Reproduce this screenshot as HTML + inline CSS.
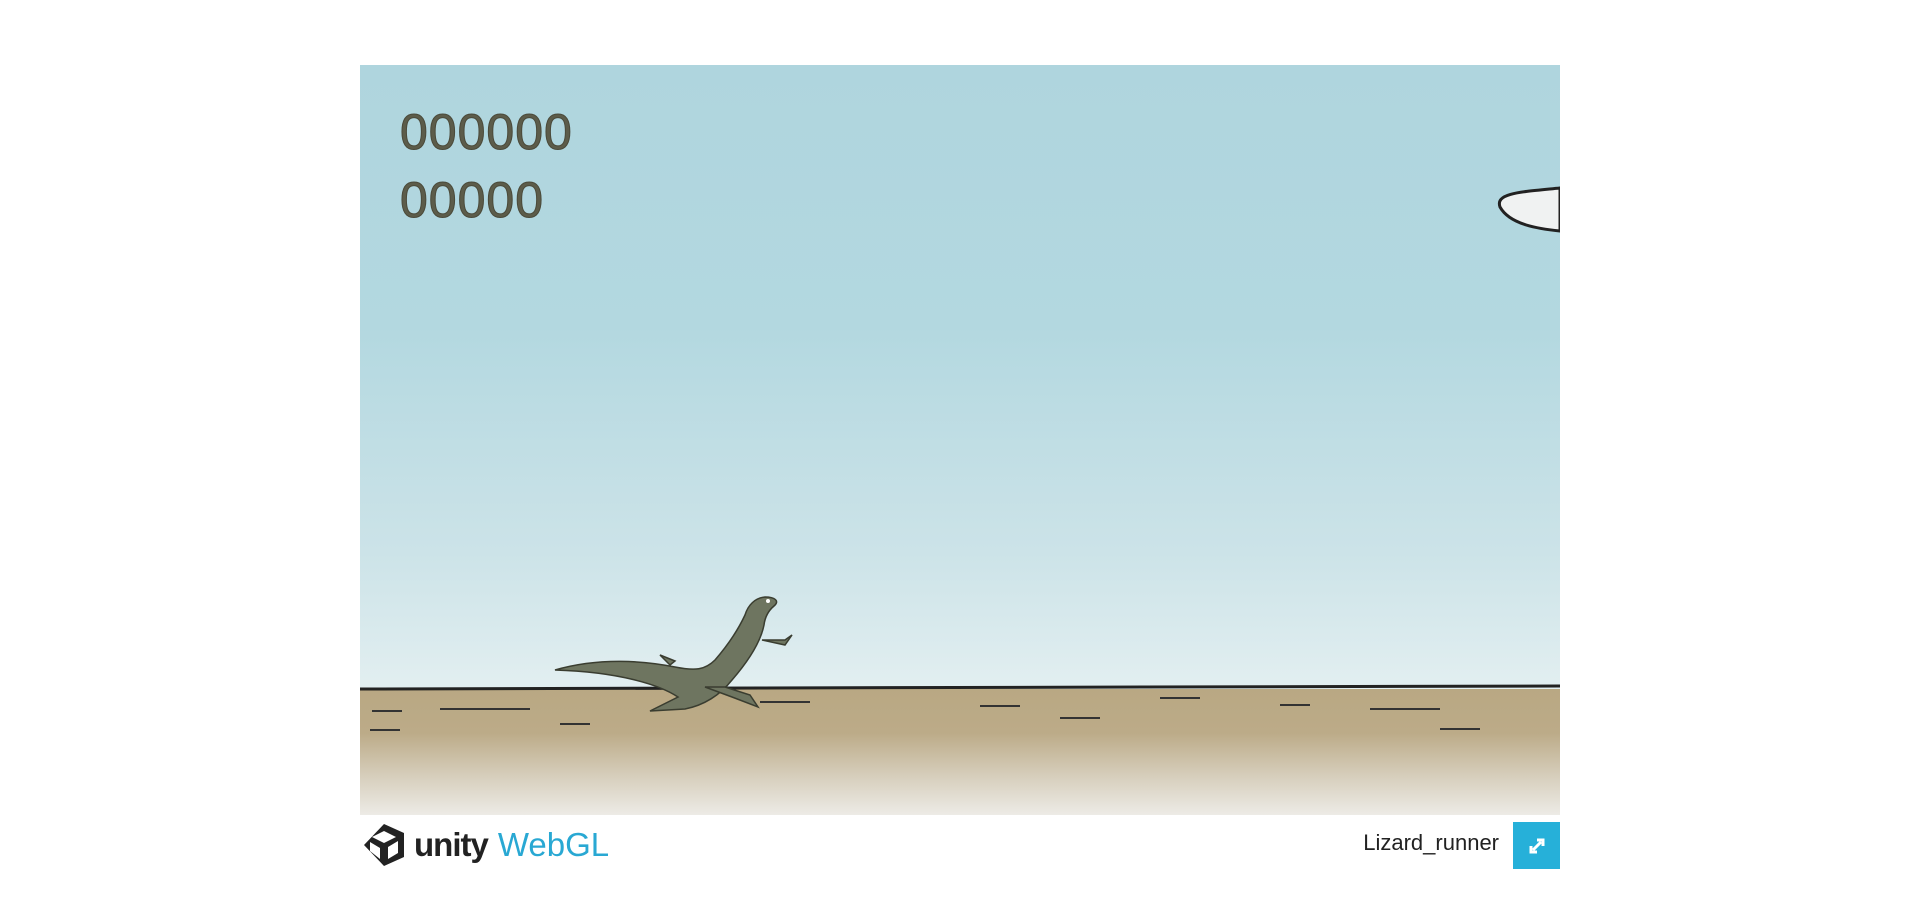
<!DOCTYPE html>
<html><head><style>
body{margin:0;width:1920px;height:900px;background:#fff;position:relative;overflow:hidden;font-family:"Liberation Sans",sans-serif}
#c{position:absolute;left:360px;top:65px;width:1200px;height:750px;overflow:hidden;background:linear-gradient(#afd5de 0%,#b3d8e0 35%,#cce3e8 65%,#e1eef0 82%)}
#g{position:absolute;left:0;top:624px;width:1200px;height:126px;background:linear-gradient(#b9a883 0%,#bcab88 35%,#d7cfbd 70%,#edebe6 100%)}
.s{position:absolute;left:40px;font-size:50px;color:#5c5c4a;-webkit-text-stroke:1px #4a4a3a;letter-spacing:1px}
#f{position:absolute;top:822px}
</style></head><body>
<div id="c">
<div id="g"></div>
<svg width="1200" height="750" style="position:absolute;left:0;top:0">
<path d="M0 624 L1200 621" stroke="#222" stroke-width="3"/>
<g stroke="#333" stroke-width="2" fill="none">
<path d="M80 644h90M12 646h30M200 659h30M400 637h50M620 641h40M700 653h40M800 633h40M920 640h30M1010 644h70M1080 664h40M10 665h30"/>
</g>
<path d="M1200 123 C1160 127 1135 128 1140 142 C1150 160 1180 164 1200 166Z" fill="#f0f2f2" stroke="#222" stroke-width="3"/>
<g fill="#6e7560" stroke="#3a3d30" stroke-width="1.5">
<path d="M195 605 C240 592 285 596 315 602 C335 606 345 605 355 595 C368 580 378 565 385 550 C388 540 395 533 405 532 C415 532 420 536 414 541 C408 546 405 552 404 560 C400 580 385 600 372 615 C360 630 345 640 325 644 L290 646 L318 632 C300 620 260 607 195 605Z"/>
<path d="M345 622 L372 632 L398 642 L390 630 L365 622Z"/>
<path d="M402 575 L425 575 L432 570 L425 580Z"/>
<path d="M315 596 L300 590 L310 600Z"/>
</g>
<circle cx="408" cy="536" r="2" fill="#fff"/>
</svg>
<div class="s" style="top:38px">000000</div>
<div class="s" style="top:106px">00000</div>
</div>
<div id="f" style="left:360px;height:46px;display:flex;align-items:center">
<svg width="48" height="48" viewBox="0 0 48 48"><path d="M24 3 L44 12 L44 36 L24 45 L4 24Z M24 10 L36 16 L24 22 L12 16Z M38 20 L38 32 L28 38 L28 26Z M10 21 L20 27 L20 38 L10 30Z" fill="#222" fill-rule="evenodd"/></svg>
<span style="font-size:33px;font-weight:bold;color:#222;margin-left:6px;letter-spacing:-1px">unity</span>
<span style="font-size:33px;color:#29a8d3;margin-left:10px">WebGL</span>
</div>
<div style="position:absolute;top:830px;right:421px;font-size:22px;color:#222">Lizard_runner</div>
<div style="position:absolute;left:1513px;top:822px;width:47px;height:47px;background:#26b0d9">
<svg width="47" height="47"><path d="M20 28l8-8M24 18h6v6M18 24v6h6" stroke="#fff" stroke-width="3" fill="none"/></svg>
</div>
</body></html>
